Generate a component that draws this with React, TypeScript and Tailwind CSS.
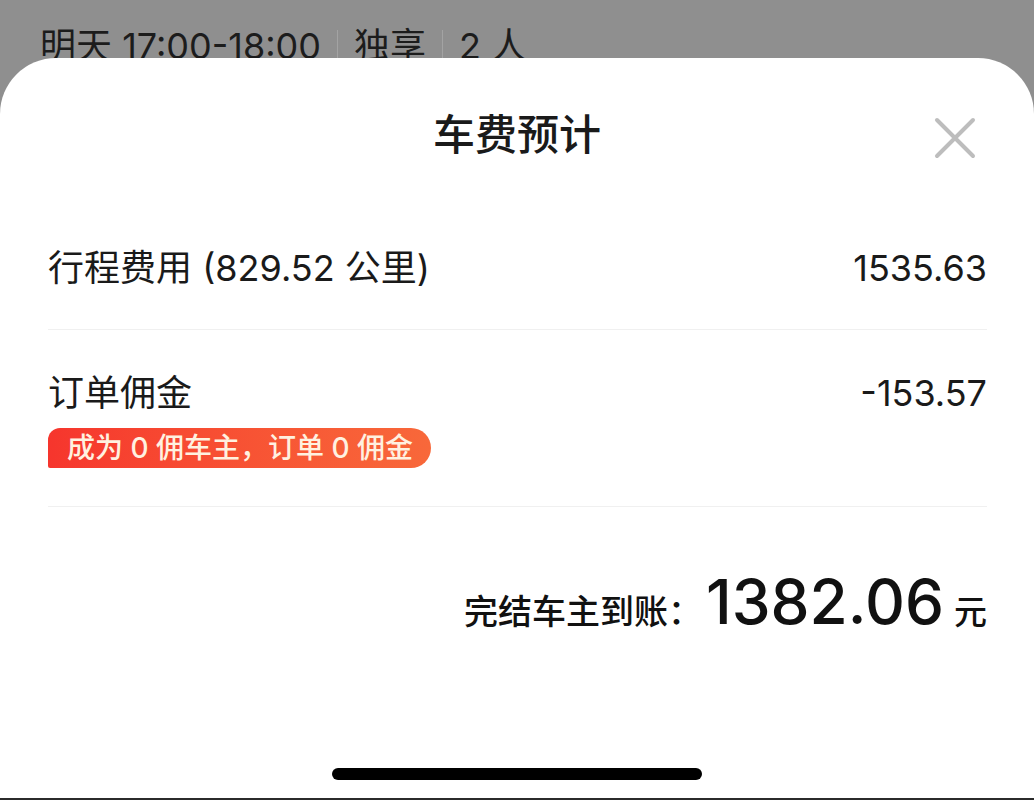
import React from 'react';

const font = "font-['Inter','Noto_Sans_CJK_SC',sans-serif]";

const CloseIcon: React.FC = () => (
  <svg width="44" height="44" viewBox="0 0 44 44" fill="none">
    <path d="M4 4L40 40M40 4L4 40" stroke="#bdbdbd" strokeWidth="4" strokeLinecap="round" />
  </svg>
);

const Divider: React.FC = () => <div className="h-px bg-[#f0f0f0]" />;

export default function App() {
  return (
    <div className={`flex h-[800px] w-[1034px] flex-col overflow-hidden bg-[#8f8f8f] ${font}`}>
      {/* background page peeking out above the sheet */}
      <div className="h-[58px] shrink-0 overflow-hidden px-[40px] pt-[25px]">
        <div className="flex items-center gap-[16px] text-[36px] leading-[42px] text-[#1c1c1c]">
          <span>明天 17:00-18:00</span>
          <span className="h-[32px] w-px bg-[#a3a3a3]" />
          <span>独享</span>
          <span className="h-[32px] w-px bg-[#a3a3a3]" />
          <span>2 人</span>
        </div>
      </div>

      {/* bottom sheet */}
      <div className="flex flex-1 flex-col rounded-t-[56px] bg-white">
        <div className="relative pt-[56px]">
          <h1 className="text-center text-[42px] font-medium leading-[42px] text-[#1a1a1a]">车费预计</h1>
          <button className="absolute right-[57px] top-[58px]" aria-label="关闭">
            <CloseIcon />
          </button>
        </div>

        <div className="pl-[48px] pr-[47px]">
          <div className="flex items-center justify-between pb-[43px] pt-[94px] text-[36px] leading-[36px] text-[#1a1a1a]">
            <span>行程费用 (829.52 公里)</span>
            <span>1535.63</span>
          </div>
          <Divider />

          <div className="pb-[38px] pt-[45px]">
            <div className="flex items-center justify-between text-[36px] leading-[36px] text-[#1a1a1a]">
              <span>订单佣金</span>
              <span>-153.57</span>
            </div>
            <div className="mt-[17px] inline-flex h-[40px] items-center rounded-bl-[2px] rounded-br-[20px] rounded-tl-[12px] rounded-tr-[20px] bg-gradient-to-r from-[#f6352d] to-[#f8683a] pl-[19px] pr-[18px] text-[28px] font-medium leading-none text-[#fff1e0]">
              成为 0 佣车主，订单 0 佣金
            </div>
          </div>
          <Divider />

          <div className="mt-[64px] flex items-baseline justify-end text-[#111]">
            <span className="text-[34px] font-medium">完结车主到账：</span>
            <span className="ml-[4px] text-[62px] font-medium leading-none">1382.06</span>
            <span className="ml-[10px] text-[33px] font-medium">元</span>
          </div>
        </div>

        <div className="mt-auto flex justify-center pb-[18px]">
          <div className="h-[12px] w-[370px] rounded-full bg-black" />
        </div>
        <div className="h-[2px] bg-[#2b2b2b]" />
      </div>
    </div>
  );
}
